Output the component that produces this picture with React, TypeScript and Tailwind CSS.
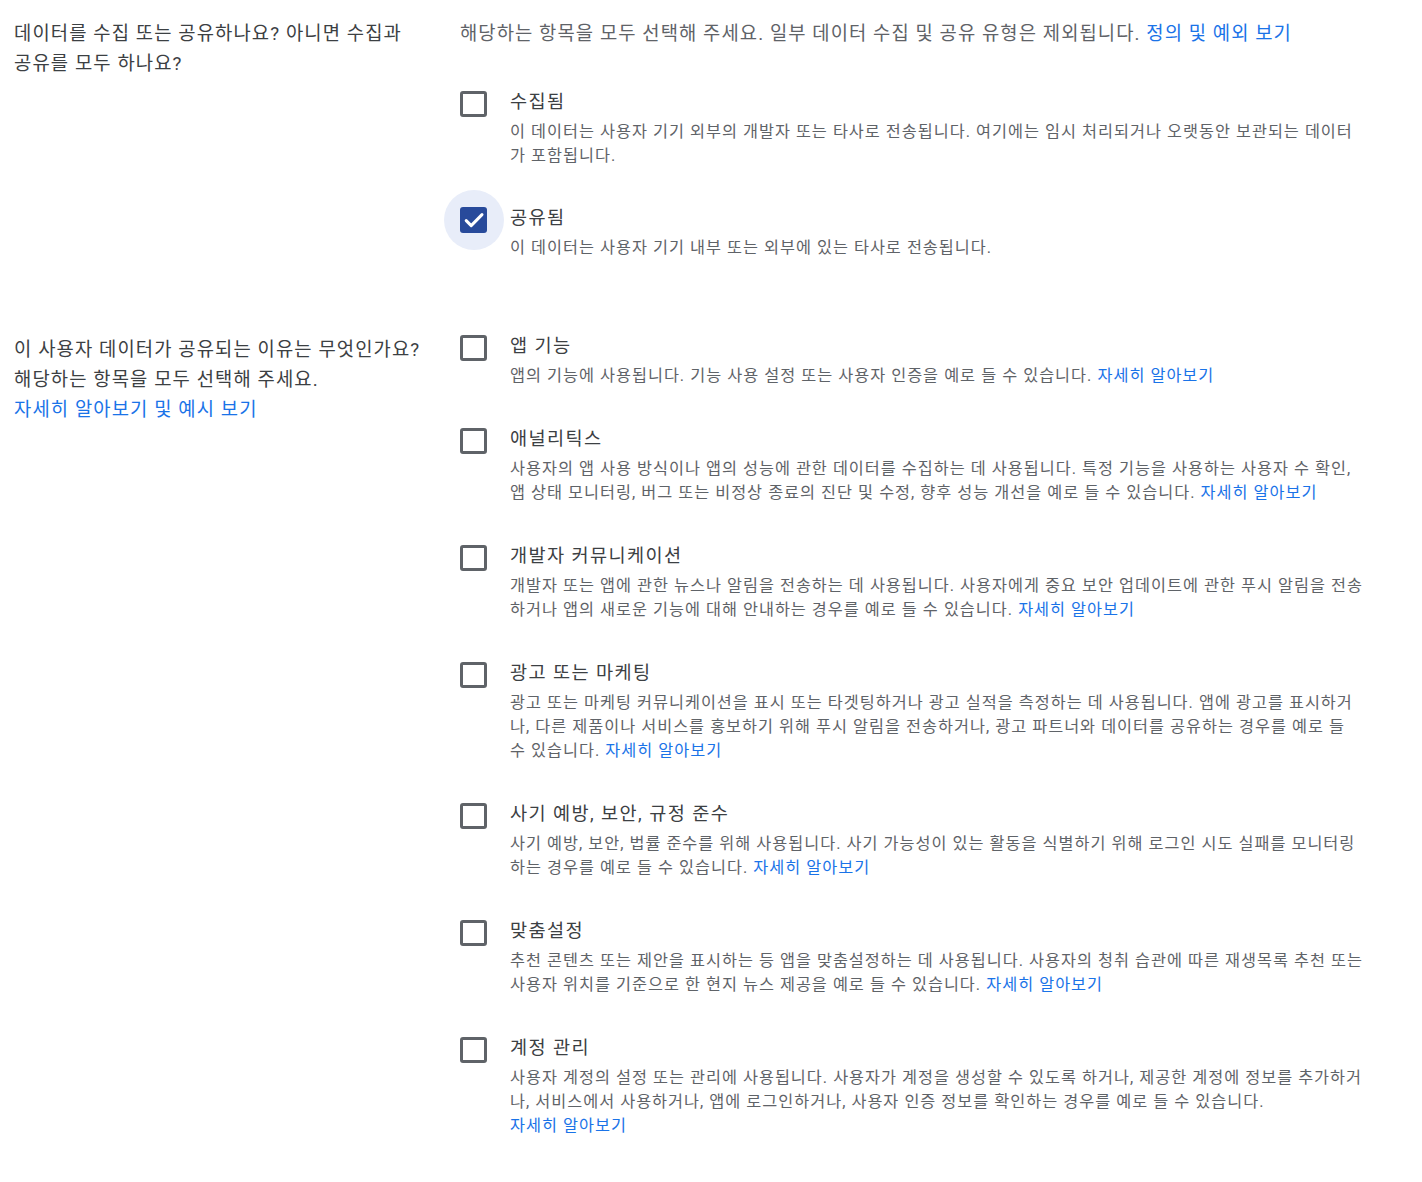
import { useState } from "react";

interface Option {
  title: string;
  description: string;
  link?: boolean;
}

const collectOptions: Option[] = [
  {
    title: "수집됨",
    description:
      "이 데이터는 사용자 기기 외부의 개발자 또는 타사로 전송됩니다. 여기에는 임시 처리되거나 오랫동안 보관되는 데이터가 포함됩니다.",
  },
  {
    title: "공유됨",
    description: "이 데이터는 사용자 기기 내부 또는 외부에 있는 타사로 전송됩니다.",
  },
];

const purposeOptions: Option[] = [
  {
    title: "앱 기능",
    description: "앱의 기능에 사용됩니다. 기능 사용 설정 또는 사용자 인증을 예로 들 수 있습니다.",
    link: true,
  },
  {
    title: "애널리틱스",
    description:
      "사용자의 앱 사용 방식이나 앱의 성능에 관한 데이터를 수집하는 데 사용됩니다. 특정 기능을 사용하는 사용자 수 확인, 앱 상태 모니터링, 버그 또는 비정상 종료의 진단 및 수정, 향후 성능 개선을 예로 들 수 있습니다.",
    link: true,
  },
  {
    title: "개발자 커뮤니케이션",
    description:
      "개발자 또는 앱에 관한 뉴스나 알림을 전송하는 데 사용됩니다. 사용자에게 중요 보안 업데이트에 관한 푸시 알림을 전송하거나 앱의 새로운 기능에 대해 안내하는 경우를 예로 들 수 있습니다.",
    link: true,
  },
  {
    title: "광고 또는 마케팅",
    description:
      "광고 또는 마케팅 커뮤니케이션을 표시 또는 타겟팅하거나 광고 실적을 측정하는 데 사용됩니다. 앱에 광고를 표시하거나, 다른 제품이나 서비스를 홍보하기 위해 푸시 알림을 전송하거나, 광고 파트너와 데이터를 공유하는 경우를 예로 들 수 있습니다.",
    link: true,
  },
  {
    title: "사기 예방, 보안, 규정 준수",
    description:
      "사기 예방, 보안, 법률 준수를 위해 사용됩니다. 사기 가능성이 있는 활동을 식별하기 위해 로그인 시도 실패를 모니터링하는 경우를 예로 들 수 있습니다.",
    link: true,
  },
  {
    title: "맞춤설정",
    description:
      "추천 콘텐츠 또는 제안을 표시하는 등 앱을 맞춤설정하는 데 사용됩니다. 사용자의 청취 습관에 따른 재생목록 추천 또는 사용자 위치를 기준으로 한 현지 뉴스 제공을 예로 들 수 있습니다.",
    link: true,
  },
  {
    title: "계정 관리",
    description:
      "사용자 계정의 설정 또는 관리에 사용됩니다. 사용자가 계정을 생성할 수 있도록 하거나, 제공한 계정에 정보를 추가하거나, 서비스에서 사용하거나, 앱에 로그인하거나, 사용자 인증 정보를 확인하는 경우를 예로 들 수 있습니다.",
    link: true,
  },
];

const Checkbox = ({
  checked,
  focused,
  onClick,
}: {
  checked: boolean;
  focused?: boolean;
  onClick: () => void;
}) => (
  <button
    type="button"
    onClick={onClick}
    className="relative mt-[4px] w-[27px] h-[26px] flex-shrink-0"
    aria-pressed={checked}
  >
    {focused && (
      <span className="absolute left-1/2 top-1/2 -translate-x-1/2 -translate-y-1/2 w-[60px] h-[60px] rounded-full bg-[#e8edf9]" />
    )}
    {checked ? (
      <span className="relative flex items-center justify-center w-[27px] h-[26px] rounded-[3px] bg-[#284a9b]">
        <svg width="24" height="24" viewBox="0 0 24 24" fill="none">
          <path
            d="M4.2 12.6l5 5L20 6.6"
            stroke="white"
            strokeWidth="3"
            strokeLinecap="round"
            strokeLinejoin="round"
          />
        </svg>
      </span>
    ) : (
      <span className="relative block w-[27px] h-[26px] rounded-[3px] border-[3px] border-[#5f6368] bg-white" />
    )}
  </button>
);

const OptionRow = ({
  option,
  checked,
  focused,
  onToggle,
}: {
  option: Option;
  checked: boolean;
  focused?: boolean;
  onToggle: () => void;
}) => (
  <li className="flex gap-[23px]">
    <Checkbox checked={checked} focused={focused} onClick={onToggle} />
    <div className="flex-1">
      <div className="text-[18.6px] leading-[30px] tracking-[1.4px] text-[#3c4043]">
        {option.title}
      </div>
      <p className="mt-[3px] text-[16.3px] leading-[24px] tracking-[1px] text-[#5f6368]">
        {option.description}
        {option.link && (
          <>
            {" "}
            <a href="#" className="whitespace-nowrap text-[#1a73e8]">
              자세히 알아보기
            </a>
          </>
        )}
      </p>
    </div>
  </li>
);

export default function App() {
  const [collect, setCollect] = useState([false, true]);
  const [purposes, setPurposes] = useState(purposeOptions.map(() => false));

  return (
    <div
      className="min-h-screen bg-white pl-[14px] pr-[59px] pt-[19px]"
      style={{ fontFamily: "Roboto, 'Noto Sans CJK KR', sans-serif" }}
    >
      {/* Collected / shared */}
      <section className="flex gap-[39px]">
        <div className="w-[407px] flex-shrink-0 text-[18.8px] leading-[30px] tracking-[1.1px] text-[#3c4043]">
          데이터를 수집 또는 공유하나요? 아니면 수집과 공유를 모두 하나요?
        </div>
        <div className="flex-1">
          <p className="text-[18.8px] leading-[30px] tracking-[1.07px] text-[#5f6368]">
            해당하는 항목을 모두 선택해 주세요. 일부 데이터 수집 및 공유 유형은 제외됩니다.{" "}
            <a href="#" className="whitespace-nowrap text-[#1a73e8]">
              정의 및 예외 보기
            </a>
          </p>
          <ul className="mt-[38px] flex flex-col gap-[35px]">
            {collectOptions.map((option, index) => (
              <OptionRow
                key={option.title}
                option={option}
                checked={collect[index]}
                focused={index === 1}
                onToggle={() =>
                  setCollect(collect.map((v, i) => (i === index ? !v : v)))
                }
              />
            ))}
          </ul>
        </div>
      </section>

      {/* Purposes */}
      <section className="flex gap-[39px] mt-[71px] pb-[40px]">
        <div className="w-[407px] flex-shrink-0 pt-[4px] text-[18.8px] leading-[30px] tracking-[1.1px] text-[#3c4043]">
          이 사용자 데이터가 공유되는 이유는 무엇인가요?
          <br />
          해당하는 항목을 모두 선택해 주세요.
          <br />
          <a href="#" className="text-[#1a73e8]">
            자세히 알아보기 및 예시 보기
          </a>
        </div>
        <ul className="flex-1 flex flex-col gap-[36px]">
          {purposeOptions.map((option, index) => (
            <OptionRow
              key={option.title}
              option={option}
              checked={purposes[index]}
              onToggle={() =>
                setPurposes(purposes.map((v, i) => (i === index ? !v : v)))
              }
            />
          ))}
        </ul>
      </section>
    </div>
  );
}
